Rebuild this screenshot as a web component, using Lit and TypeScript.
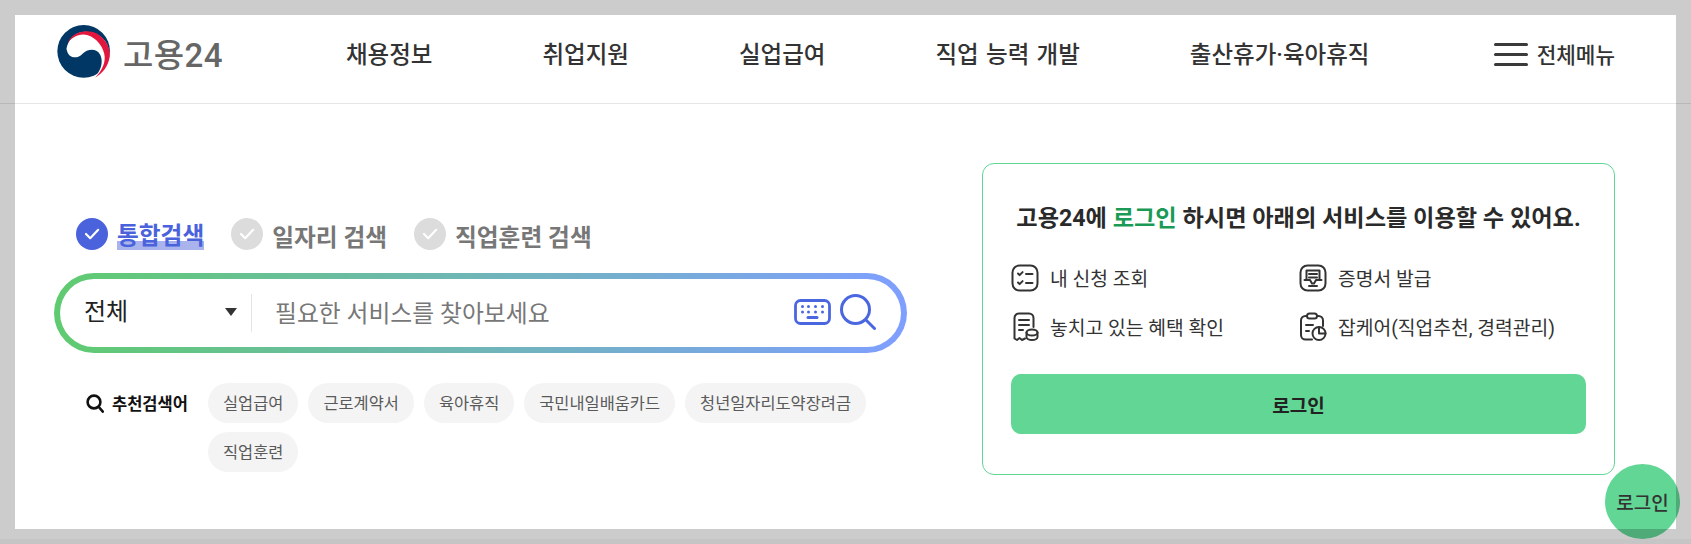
import { LitElement, html, css, svg } from "lit";
import { customElement } from "lit/decorators.js";

const NAV = ["채용정보", "취업지원", "실업급여", "직업 능력 개발", "출산휴가·육아휴직"];
const CHIPS = ["실업급여", "근로계약서", "육아휴직", "국민내일배움카드", "청년일자리도약장려금", "직업훈련"];

const check = svg`<path d="M10 16l4.200 4.200 8-8.400" fill="none" stroke="#fff" stroke-width="2.200" stroke-linecap="round" stroke-linejoin="round"/>`;

const logo = html`<svg class="logo" viewBox="52 30 160 160" width="54" height="54">
  <circle cx="131" cy="108" r="78" fill="#003764"/>
  <path fill="#fff" d="M80 100C85 130 112 132 127 116C142 100 170 98 180 118C190 140 182 165 163 186C195 170 215 135 205 100C195 60 150 45 120 52C100 58 85 75 80 100Z"/>
  <path fill="#e3173e" d="M83 85C95 50 140 40 170 55C200 72 212 105 208 125C203 155 185 175 165 186C185 165 198 140 192 115C185 85 160 60 130 58C110 58 92 70 83 85Z"/>
</svg>`;

const keyboard = html`<svg viewBox="0 0 37 26" width="37" height="26" fill="none">
  <rect x="1.500" y="1.500" width="34" height="23" rx="5" stroke="#4a67e0" stroke-width="2.800"/>
  <g fill="#4a67e0">
    <circle cx="8.500" cy="7.500" r="1.500"/><circle cx="14.500" cy="7.500" r="1.500"/><circle cx="21.500" cy="7.500" r="1.500"/><circle cx="28.500" cy="7.500" r="1.500"/>
    <circle cx="8.500" cy="13" r="1.500"/><circle cx="14.500" cy="13" r="1.500"/><circle cx="21.500" cy="13" r="1.500"/><circle cx="28.500" cy="13" r="1.500"/>
    <rect x="12.500" y="17" width="12" height="3" rx="1.500"/>
  </g>
</svg>`;

const bigSearch = html`<svg viewBox="0 0 36 36" width="36" height="36" fill="none" stroke="#4a67e0" stroke-width="3" stroke-linecap="round">
  <circle cx="15.500" cy="15.500" r="14"/><path d="M26 26l8.500 8.500"/>
</svg>`;

const smallSearch = html`<svg viewBox="0 0 18 19" width="18" height="19" fill="none" stroke="#111" stroke-width="2.600" stroke-linecap="round">
  <circle cx="8" cy="8" r="6.400"/><path d="M12.800 13l4 4.600"/>
</svg>`;

const iconList = html`<svg viewBox="0 0 28 28" width="28" height="28" fill="none" stroke="#333" stroke-width="2" stroke-linecap="round" stroke-linejoin="round">
  <rect x="1.500" y="1.500" width="25" height="25" rx="7"/>
  <path d="M7 9.500l1.600 1.600 3-3M15 10h6.500M7 18.500l1.600 1.600 3-3M15 19h6.500"/>
</svg>`;

const iconReceipt = html`<svg viewBox="0 0 28 30" width="28" height="30" fill="none" stroke="#333" stroke-width="2" stroke-linecap="round" stroke-linejoin="round">
  <path d="M14 26.500l-3 1.500-2.500-2-2.500 2-2.500-1.500V6a4.500 4.500 0 0 1 4.500-4.500h10A4.500 4.500 0 0 1 22.500 6v9"/>
  <path d="M8 8h10M8 13h10M8 18h4"/>
  <ellipse cx="21" cy="20.500" rx="5.500" ry="3"/>
  <path d="M15.500 20.500v4.500c0 1.700 2.500 3 5.500 3s5.500-1.300 5.500-3v-4.500"/>
</svg>`;

const iconDoc = html`<svg viewBox="0 0 28 28" width="28" height="28" fill="none" stroke="#333" stroke-width="2" stroke-linecap="round" stroke-linejoin="round">
  <rect x="1.500" y="1.500" width="25" height="25" rx="7"/>
  <path d="M7.500 15V6.500h13V15"/>
  <path d="M10 10h8M10 13.500h8"/>
  <path d="M5.500 16h5.500l2 3.500h2l2-3.500h5.500"/>
  <path d="M10 22h8"/>
</svg>`;

const iconClip = html`<svg viewBox="0 0 28 30" width="28" height="30" fill="none" stroke="#333" stroke-width="2" stroke-linecap="round" stroke-linejoin="round">
  <rect x="8" y="1.500" width="10" height="5" rx="2.500"/>
  <path d="M8 4H6.500A4.500 4.500 0 0 0 2 8.500V23a4.500 4.500 0 0 0 4.500 4.500H13M18 4h1.500A4.500 4.500 0 0 1 24 8.500V14"/>
  <path d="M7 13h7M7 19h3"/>
  <circle cx="20" cy="21.500" r="6.500"/>
  <path d="M20 15v6.500h6.500" />
</svg>`;

@customElement("app-root")
export class AppRoot extends LitElement {
  static styles = css`
    :host {
      display: block;
      height: 544px;
      background: #fff;
      font-family: Roboto, "Noto Sans CJK KR", "Noto Sans", sans-serif;
      color: #222;
      overflow: hidden;
    }

    header {
      height: 103px;
      border-bottom: 1px solid #e6e6e6;
      display: flex;
      align-items: center;
      padding: 0 76px 0 57px;
    }
    .brand {
      display: flex;
      align-items: center;
      gap: 12px;
      width: 289px;
    }
    .brand span {
      font-size: 33px;
      font-weight: 500;
      color: #666;
      padding-top: 3px;
      letter-spacing: 0.4px;
    }
    nav {
      display: flex;
      gap: 110px;
      font-size: 23.500px;
      font-weight: 500;
      color: #333;
      white-space: nowrap;
      word-spacing: 1.500px;
      padding-top: 3px;
    }
    .all {
      margin-left: auto;
      display: flex;
      align-items: center;
      gap: 9px;
      font-size: 21.300px;
      font-weight: 500;
      color: #333;
      height: 30px;
      padding-top: 4px;
    }
    .burger {
      width: 34px;
      display: flex;
      flex-direction: column;
      gap: 7px;
      margin-top: 1px;
    }
    .burger i {
      height: 3px;
      background: #3a3a3a;
      border-radius: 2px;
    }

    main {
      height: 435px;
      box-sizing: border-box;
      display: flex;
      justify-content: space-between;
      padding: 59px 76px 0 54px;
    }
    .foot {
      height: 5px;
      background: #f7f7f7;
    }
    .left {
      width: 853px;
      padding-top: 55px;
    }
    .tabs {
      display: flex;
      align-items: center;
      padding-left: 22px;
      height: 32px;
      font-size: 23.700px;
      font-weight: 700;
      color: #777;
    }
    .tab {
      display: flex;
      align-items: center;
      gap: 9px;
      margin-right: 27px;
    }
    .tab span {
      padding-top: 3px;
    }
    .tab svg circle {
      fill: #dcdcdc;
    }
    .tab.on svg circle {
      fill: #4a63dd;
    }
    .tab.on span {
      color: #4a63dd;
      background: linear-gradient(transparent 70%, #a9b4ec 70%);
      line-height: 28px;
    }

    .searchbar {
      margin-top: 23px;
      height: 80px;
      box-sizing: border-box;
      border-radius: 40px;
      padding: 6px;
      background: linear-gradient(90deg, #5fcb70, #7f9fff);
    }
    .searchbar > div {
      height: 100%;
      background: #fff;
      border-radius: 34px;
      display: flex;
      align-items: center;
      padding: 0 25px 0 24px;
    }
    .select {
      width: 153px;
      display: flex;
      align-items: center;
      justify-content: space-between;
      font-size: 24px;
      color: #222;
      padding-bottom: 8px;
      box-sizing: border-box;
    }
    .arrow {
      width: 0;
      height: 0;
      border: 6px solid transparent;
      border-top: 8px solid #333;
      border-bottom: 0;
      margin-top: 6px;
    }
    .sep {
      width: 1px;
      height: 38px;
      background: #e4e4e4;
      margin: 0 23px 0 14px;
    }
    .ph {
      flex: 1;
      font-size: 23.800px;
      color: #777;
      padding-bottom: 4px;
    }
    .tools {
      display: flex;
      align-items: center;
      gap: 9px;
      padding-bottom: 3px;
    }

    .rec {
      margin-top: 30px;
      display: flex;
      padding-left: 32px;
    }
    .rec b {
      display: flex;
      align-items: center;
      gap: 8px;
      height: 40px;
      width: 122px;
      flex: none;
      font-size: 16.500px;
      font-weight: 700;
      color: #111;
      white-space: nowrap;
    }
    .chips {
      display: flex;
      flex-wrap: wrap;
      gap: 9px 10px;
    }
    .chip {
      height: 40px;
      box-sizing: border-box;
      padding: 0 15px 3px;
      display: flex;
      align-items: center;
      background: #f4f4f4;
      border-radius: 20px;
      font-size: 16.420px;
      color: #5a5a5a;
    }

    .card {
      width: 633px;
      height: 312px;
      box-sizing: border-box;
      border: 1px solid #62d695;
      border-radius: 12px;
      padding: 35px 28px 0;
    }
    .card h2 {
      margin: 0;
      text-align: center;
      font-size: 23.200px;
      font-weight: 700;
      line-height: 38px;
      color: #2a2a2a;
      white-space: nowrap;
    }
    .card h2 em {
      font-style: normal;
      color: #1a9a55;
    }
    .links {
      margin-top: 26px;
      display: grid;
      grid-template-columns: 288px 1fr;
      row-gap: 19px;
      font-size: 19.300px;
      color: #333;
    }
    .links div {
      display: flex;
      align-items: center;
      gap: 9px;
      height: 30px;
      white-space: nowrap;
    }
    .links svg {
      flex: none;
      margin-right: 2px;
    }
    .login {
      margin-top: 32px;
      height: 60px;
      border-radius: 10px;
      background: #62d695;
      display: flex;
      align-items: center;
      justify-content: center;
      font-size: 19px;
      font-weight: 700;
      color: #222;
    }

    .fab {
      position: absolute;
      left: 1605px;
      top: 464px;
      width: 75px;
      height: 75px;
      border-radius: 50%;
      background: #62d695;
      display: flex;
      align-items: center;
      justify-content: center;
      font-size: 19px;
      font-weight: 500;
      color: #333;
    }
    .frame {
      position: absolute;
      left: 0;
      top: 0;
      width: 1691px;
      height: 544px;
      box-sizing: border-box;
      border: 15px solid rgba(0, 0, 0, 0.2);
      pointer-events: none;
    }
  `;

  render() {
    return html`
      <header>
        <div class="brand">${logo}<span>고용24</span></div>
        <nav>${NAV.map((n) => html`<span>${n}</span>`)}</nav>
        <div class="all">
          <div class="burger"><i></i><i></i><i></i></div>
          전체메뉴
        </div>
      </header>
      <main>
        <section class="left">
          <div class="tabs">
            ${[["통합검색", true], ["일자리 검색", false], ["직업훈련 검색", false]].map(
              ([label, on]) => html`
                <div class="tab ${on ? "on" : ""}">
                  <svg viewBox="0 0 32 32" width="32" height="32"><circle cx="16" cy="16" r="16"></circle>${check}</svg>
                  <span>${label}</span>
                </div>
              `
            )}
          </div>
          <div class="searchbar">
            <div>
              <div class="select">전체<i class="arrow"></i></div>
              <i class="sep"></i>
              <span class="ph">필요한 서비스를 찾아보세요</span>
              <div class="tools">${keyboard}${bigSearch}</div>
            </div>
          </div>
          <div class="rec">
            <b>${smallSearch}추천검색어</b>
            <div class="chips">${CHIPS.map((c) => html`<span class="chip">${c}</span>`)}</div>
          </div>
        </section>
        <aside class="card">
          <h2>고용24에 <em>로그인</em> 하시면 아래의 서비스를 이용할 수 있어요.</h2>
          <div class="links">
            <div>${iconList}내 신청 조회</div>
            <div>${iconDoc}증명서 발급</div>
            <div>${iconReceipt}놓치고 있는 혜택 확인</div>
            <div>${iconClip}잡케어(직업추천, 경력관리)</div>
          </div>
          <div class="login">로그인</div>
        </aside>
      </main>
      <div class="foot"></div>
      <div class="fab">로그인</div>
      <div class="frame"></div>
    `;
  }
}
